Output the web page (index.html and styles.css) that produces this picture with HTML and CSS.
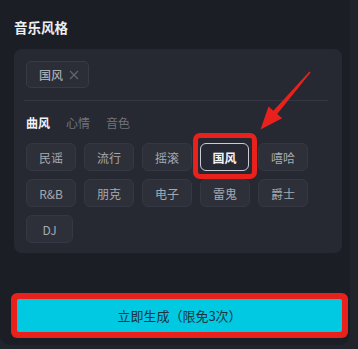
FILE: index.html
```html
<!DOCTYPE html>
<html lang="zh">
<head>
<meta charset="utf-8">
<link rel="stylesheet" href="styles.css">
</head>
<body>
<div class="page">
  <div class="main">
    <h2 class="title">音乐风格</h2>
    <div class="panel">
      <div class="chips">
        <span class="chip">国风<svg class="chip-x" viewBox="0 0 10 10" width="10" height="10"><path d="M1 1L9 9M9 1L1 9" stroke="#62656e" stroke-width="1.2" fill="none"/></svg></span>
      </div>
      <div class="divider"></div>
      <div class="tabs">
        <span class="tab active">曲风</span>
        <span class="tab">心情</span>
        <span class="tab">音色</span>
      </div>
      <div class="grid">
        <button class="opt">民谣</button>
        <button class="opt">流行</button>
        <button class="opt">摇滚</button>
        <button class="opt selected">国风</button>
        <button class="opt">嘻哈</button>
        <button class="opt">R&amp;B</button>
        <button class="opt">朋克</button>
        <button class="opt">电子</button>
        <button class="opt">雷鬼</button>
        <button class="opt">爵士</button>
        <button class="opt narrow">DJ</button>
      </div>
    </div>
    <div class="footer">
      <button class="generate">立即生成（限免3次）</button>
    </div>
  </div>
  <div class="mark-box"></div>
  <svg class="arrow" viewBox="0 0 358 349" width="358" height="349">
    <polygon fill="#e8211d" points="310.6,72.4 277.2,113.9 282.1,118.2 260.5,129.5 268.5,106.4 273.4,110.7 309.4,71.6"/>
  </svg>
</div>
</body>
</html>
```
FILE: styles.css
```css
* { box-sizing: border-box; }
html, body { margin: 0; padding: 0; }
body {
  background: #22242c;
  font-family: "Noto Sans CJK SC", "Noto Sans", sans-serif;
}
.page {
  position: relative;
  width: 358px;
  height: 349px;
  overflow: hidden;
  background: #22242c;
}
.main {
  width: 350px;
  height: 345px;
  background: #1c1e26;
  border-radius: 0 0 10px 10px;
  padding: 17px 0 0 14px;
  display: flex;
  flex-direction: column;
}
.title {
  margin: 0;
  font-size: 13.5px;
  line-height: 20px;
  font-weight: 700;
  color: #eceef2;
}
.panel {
  margin-top: 12px;
  width: 328px;
  height: 204px;
  background: #262932;
  border-radius: 8px;
  padding: 12px 12px 0 12px;
}
.chips { display: flex; }
.chip {
  display: inline-flex;
  align-items: center;
  height: 27px;
  padding: 0 9px 0 12px;
  border: 1px solid #383b44;
  background: #2b2e37;
  border-radius: 5px;
  color: #a9acb3;
  font-size: 12px;
  font-weight: 500;
}
.chip-x {
  margin-left: 6px;
  display: block;
}
.divider {
  margin: 12px 0 0 -2px;
  height: 1px;
  width: 304px;
  background: #343741;
}
.tabs {
  display: flex;
  gap: 16px;
  margin-top: 13px;
  height: 18px;
  align-items: center;
}
.tab {
  font-size: 12px;
  color: #6f727a;
  line-height: 18px;
}
.tab.active {
  color: #f1f2f5;
  font-weight: 700;
}
.grid {
  margin-top: 11px;
  display: grid;
  grid-template-columns: repeat(5, 50px);
  column-gap: 8px;
  row-gap: 8px;
}
.opt {
  width: 50px;
  height: 28px;
  border: 1px solid #353842;
  background: #2d3039;
  border-radius: 6px;
  color: #a6a9b0;
  font-family: inherit;
  font-size: 12px;
  padding: 0;
}
.opt.narrow { width: 47px; }
.opt.selected {
  width: 49px;
  background: #262934;
  border: 1px solid #c9ccd3;
  color: #f4f5f8;
  font-weight: 700;
}
.footer {
  margin-top: auto;
  padding: 0 0 13px 3px;
}
.generate {
  width: 325px;
  height: 33px;
  border: none;
  border-radius: 2px;
  background: #00c9e1;
  color: #1d3340;
  font-family: inherit;
  font-size: 13px;
  box-shadow: 0 0 0 6px #e8211d;
  padding: 0;
}
.mark-box {
  position: absolute;
  left: 193px;
  top: 133px;
  width: 64px;
  height: 46px;
  border: 5px solid #e8211d;
  border-radius: 7px;
}
.arrow {
  position: absolute;
  left: 0;
  top: 0;
  pointer-events: none;
}
```
